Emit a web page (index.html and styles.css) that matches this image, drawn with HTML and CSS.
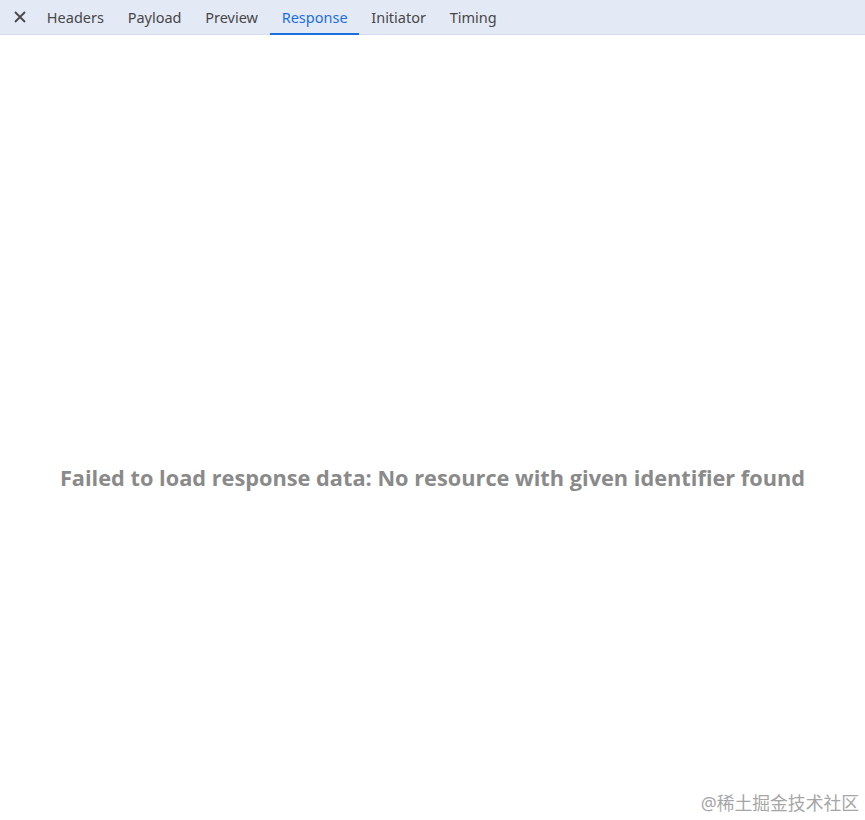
FILE: index.html
```html
<!DOCTYPE html>
<html lang="en">
<head>
  <meta charset="UTF-8">
  <title>Response</title>
  <link rel="stylesheet" href="styles.css">
</head>
<body>
  <div class="panel">
    <!-- TABS -->
    <div class="tab-bar">
      <button class="close-btn" aria-label="Close">
        <svg width="12" height="12" viewBox="0 0 12 12">
          <path d="M1 1 L11 11 M11 1 L1 11" stroke="#474747" stroke-width="1.8" fill="none"/>
        </svg>
      </button>
      <div class="tab">Headers</div>
      <div class="tab">Payload</div>
      <div class="tab">Preview</div>
      <div class="tab active">Response</div>
      <div class="tab">Initiator</div>
      <div class="tab">Timing</div>
    </div>

    <!-- CONTENU -->
    <div class="empty-view">
      <div class="empty-message">Failed to load response data: No resource with given identifier found</div>
    </div>

    <div class="watermark">@稀土掘金技术社区</div>
  </div>
</body>
</html>
```

FILE: styles.css
```css
:root {
  --bar-bg: #e4e9f6;
  --bar-border: #d3dbee;
  --tab-color: #474747;
  --active-color: #1a6fe0;
  --message-color: #8a8a8a;
}

*, *::before, *::after {
  box-sizing: border-box;
  margin: 0;
  padding: 0;
}

body {
  font-family: "Noto Sans", "Noto Sans CJK SC", sans-serif;
  background: #fff;
}

.panel {
  position: relative;
  width: 865px;
  height: 820px;
  display: flex;
  flex-direction: column;
}

/* BARRE D'ONGLETS */
.tab-bar {
  display: flex;
  align-items: stretch;
  height: 35px;
  background-color: var(--bar-bg);
  border-bottom: 1px solid var(--bar-border);
}

.close-btn {
  display: flex;
  align-items: center;
  width: 35px;
  padding-left: 14px;
  border: none;
  background: none;
}

.tab {
  display: flex;
  align-items: center;
  padding: 0 11.85px;
  font-size: 14.5px;
  color: var(--tab-color);
  border-bottom: 2px solid transparent;
  margin-bottom: -1px;
}

.tab.active {
  color: var(--active-color);
  border-bottom-color: var(--active-color);
}

/* MESSAGE VIDE */
.empty-view {
  flex: 1;
  display: flex;
  justify-content: center;
  align-items: center;
  padding-top: 100px;
}

.empty-message {
  font-family: "Open Sans", sans-serif;
  font-weight: 700;
  font-size: 21.75px;
  color: var(--message-color);
}

.watermark {
  position: absolute;
  right: 6px;
  bottom: 5px;
  font-size: 17.8px;
  color: #a6a6a6;
}
```
